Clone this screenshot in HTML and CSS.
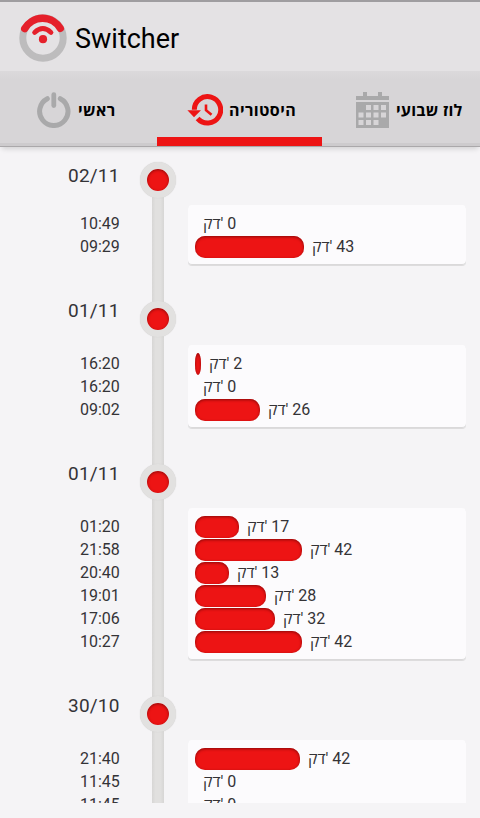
FILE: index.html
```
<!DOCTYPE html>
<html lang="he">
<head>
  <meta charset="UTF-8">
  <title>Switcher</title>
  <meta name="viewport" content="width=device-width, initial-scale=1.0">
  <link rel="stylesheet" href="styles.css">
</head>
<body>
  <header class="header">
    <svg class="logo" width="48" height="48" viewBox="0 0 48 48" fill="none">
      <circle cx="24" cy="24" r="20.2" stroke="#bdbcbd" stroke-width="7"/>
      <path d="M5.700 14.600A20.700 20.700 0 0 1 41.300 14.300" stroke="#e5202b" stroke-width="7.4" stroke-linecap="round"/>
      <path d="M15.600 18.400Q23.800 10.800 32 18.400" stroke="#e5202b" stroke-width="4.8" stroke-linecap="round"/>
      <circle cx="24" cy="25.2" r="4.1" fill="#e5202b"/>
    </svg>
    <h1>Switcher</h1>
  </header>

  <nav class="tabs">
    <a class="tab tab-main">
      <svg width="34" height="36" viewBox="0 0 34 36" fill="none" stroke="#a9a9aa" stroke-linecap="round">
        <path d="M10.3 6.7A14.2 14.2 0 1 0 23.3 6.7" stroke-width="5"/>
        <path d="M16.8 2.7V13.5" stroke-width="4.8"/>
      </svg>
      <span dir="rtl">ראשי</span>
    </a>
    <a class="tab tab-history active">
      <svg width="36" height="32" viewBox="0 0 36 32" fill="none" stroke="#ed1414">
        <path d="M7.3 15.8A13.2 13.2 0 1 1 10.6 24.5" stroke-width="5"/>
        <path d="M0.4 16.2H14L7 23.2Z" fill="#ed1414" stroke="none"/>
        <path d="M19 10.5V16.2L24.5 20.8" stroke-width="2.6"/>
      </svg>
      <span dir="rtl">היסטוריה</span>
    </a>
    <a class="tab tab-week">
      <svg width="33" height="36" viewBox="0 0 33 36">
        <path fill="#a9a9aa" d="M0 4H7V0H11V4H22V0H26V4H33V8H0ZM0 10H33V36H0Z"/>
        <path fill="#d7d5d7" d="M10 13h5v5h-5zM17.500 13h5v5h-5zM25 13h5v5h-5zM2.500 20.500h5v5h-5zM10 20.500h5v5h-5zM17.500 20.500h5v5h-5zM25 20.500h5v5h-5zM2.500 28h5v5h-5zM10 28h5v5h-5zM17.500 28h5v5h-5z"/>
      </svg>
      <span dir="rtl">לוז שבועי</span>
    </a>
  </nav>

  <main class="timeline">
    <section class="day">
      <div class="times">
        <h2>02/11</h2>
        <time>10:49</time>
        <time>09:29</time>
      </div>
      <div class="rail"><i class="dot"></i></div>
      <div class="card">
        <div class="row"><span class="label"><bdi>דק</bdi>' 0</span></div>
        <div class="row"><span class="bar" style="width: 109px"></span><span class="label"><bdi>דק</bdi>' 43</span></div>
      </div>
    </section>

    <section class="day">
      <div class="times">
        <h2>01/11</h2>
        <time>16:20</time>
        <time>16:20</time>
        <time>09:02</time>
      </div>
      <div class="rail"><i class="dot"></i></div>
      <div class="card">
        <div class="row"><span class="bar" style="width: 6px"></span><span class="label"><bdi>דק</bdi>' 2</span></div>
        <div class="row"><span class="label"><bdi>דק</bdi>' 0</span></div>
        <div class="row"><span class="bar" style="width: 65px"></span><span class="label"><bdi>דק</bdi>' 26</span></div>
      </div>
    </section>

    <section class="day">
      <div class="times">
        <h2>01/11</h2>
        <time>01:20</time>
        <time>21:58</time>
        <time>20:40</time>
        <time>19:01</time>
        <time>17:06</time>
        <time>10:27</time>
      </div>
      <div class="rail"><i class="dot"></i></div>
      <div class="card">
        <div class="row"><span class="bar" style="width: 44px"></span><span class="label"><bdi>דק</bdi>' 17</span></div>
        <div class="row"><span class="bar" style="width: 107px"></span><span class="label"><bdi>דק</bdi>' 42</span></div>
        <div class="row"><span class="bar" style="width: 34px"></span><span class="label"><bdi>דק</bdi>' 13</span></div>
        <div class="row"><span class="bar" style="width: 71px"></span><span class="label"><bdi>דק</bdi>' 28</span></div>
        <div class="row"><span class="bar" style="width: 80px"></span><span class="label"><bdi>דק</bdi>' 32</span></div>
        <div class="row"><span class="bar" style="width: 107px"></span><span class="label"><bdi>דק</bdi>' 42</span></div>
      </div>
    </section>

    <section class="day">
      <div class="times">
        <h2>30/10</h2>
        <time>21:40</time>
        <time>11:45</time>
        <time>11:45</time>
      </div>
      <div class="rail"><i class="dot"></i></div>
      <div class="card">
        <div class="row"><span class="bar" style="width: 105px"></span><span class="label"><bdi>דק</bdi>' 42</span></div>
        <div class="row"><span class="label"><bdi>דק</bdi>' 0</span></div>
        <div class="row"><span class="label"><bdi>דק</bdi>' 0</span></div>
      </div>
    </section>
  </main>
</body>
</html>
```

FILE: styles.css
```
* {
  box-sizing: border-box;
}

body {
  margin: 0;
  height: 818px;
  overflow: hidden;
  background-color: #f5f4f6;
  font-family: Roboto, "Open Sans", sans-serif;
  color: #343336;
}

/* title bar */
.header {
  display: flex;
  align-items: center;
  gap: 8px;
  height: 71px;
  padding: 3px 0 0 19px;
  border-top: 2px solid #9f9da0;
  background-color: #e4e2e4;
}

.header h1 {
  margin: 0;
  padding-top: 2px;
  font-size: 27px;
  font-weight: 400;
  color: #000;
}

/* tabs */
.tabs {
  display: grid;
  grid-template-columns: 157px 165px 158px;
  height: 76px;
  background: linear-gradient(#dbd9db, #d7d5d7 8px);
  border-bottom: 1px solid #aaa8aa;
  box-shadow: 0 4px 5px -2px rgba(0, 0, 0, 0.14);
}

.tab {
  display: flex;
  align-items: center;
  gap: 7px;
  padding-top: 5px;
  border-bottom: 3px solid #cdcbcd;
  font-family: "Open Sans", sans-serif;
  font-size: 16px;
  font-weight: 700;
  letter-spacing: 0.4px;
  white-space: nowrap;
  color: #000;
}

.tab-main {
  padding-left: 37px;
}

.tab-history {
  padding-left: 30px;
  gap: 6px;
}

.tab-week {
  padding-left: 34px;
  letter-spacing: 0.2px;
}

.tab.active {
  padding-top: 11px;
  border-bottom: 9px solid #ed1414;
}

/* timeline */
.timeline {
  height: 656px;
  overflow: hidden;
}

.day {
  display: grid;
  grid-template-columns: 128px 60px 278px;
}

.times {
  display: flex;
  flex-direction: column;
  padding-left: 68px;
}

.times h2 {
  height: 87px;
  margin: 0;
  padding-top: 34px;
  font-size: 19px;
  line-height: 24px;
  font-weight: 400;
  letter-spacing: 0.2px;
}

.times time {
  padding-left: 12px;
  font-size: 16px;
  line-height: 23px;
}

.rail {
  display: flex;
  justify-content: center;
  padding-top: 36px;
  background: linear-gradient(90deg, #d7d6d5, #e1e0df 30%, #e1e0df 70%, #d7d6d5) center / 12px 100% no-repeat;
}

.dot {
  width: 36px;
  height: 36px;
  border: 7px solid #e2e1e0;
  border-radius: 50%;
  background-color: #ed1414;
  box-shadow: inset 0 1px 3px #8c0909, 0 0 1px #cbcaca;
}

.card {
  margin-top: 80px;
  padding: 7px;
  border-radius: 4px;
  background-color: #fcfbfd;
  box-shadow: inset 0 -1px 0 #dad9da, 0 1px 0 #dddcdd;
}

.row {
  display: flex;
  align-items: center;
  height: 23px;
}

/* short bars turn into an ellipse */
.bar {
  height: 22px;
  border-radius: min(10px, 50%) / 10px;
  background-color: #ed1414;
  box-shadow: inset 0 1px 3px #8c0909;
}

.label {
  margin-left: 8px;
  font-size: 16px;
  line-height: 23px;
  white-space: pre;
}

/* the line starts at the first dot */
.day:first-child .times h2 {
  height: 65px;
  padding-top: 17px;
}

.day:first-child .rail {
  padding-top: 15px;
  background-position: center 33px;
}

.day:first-child .card {
  margin-top: 58px;
}
```
